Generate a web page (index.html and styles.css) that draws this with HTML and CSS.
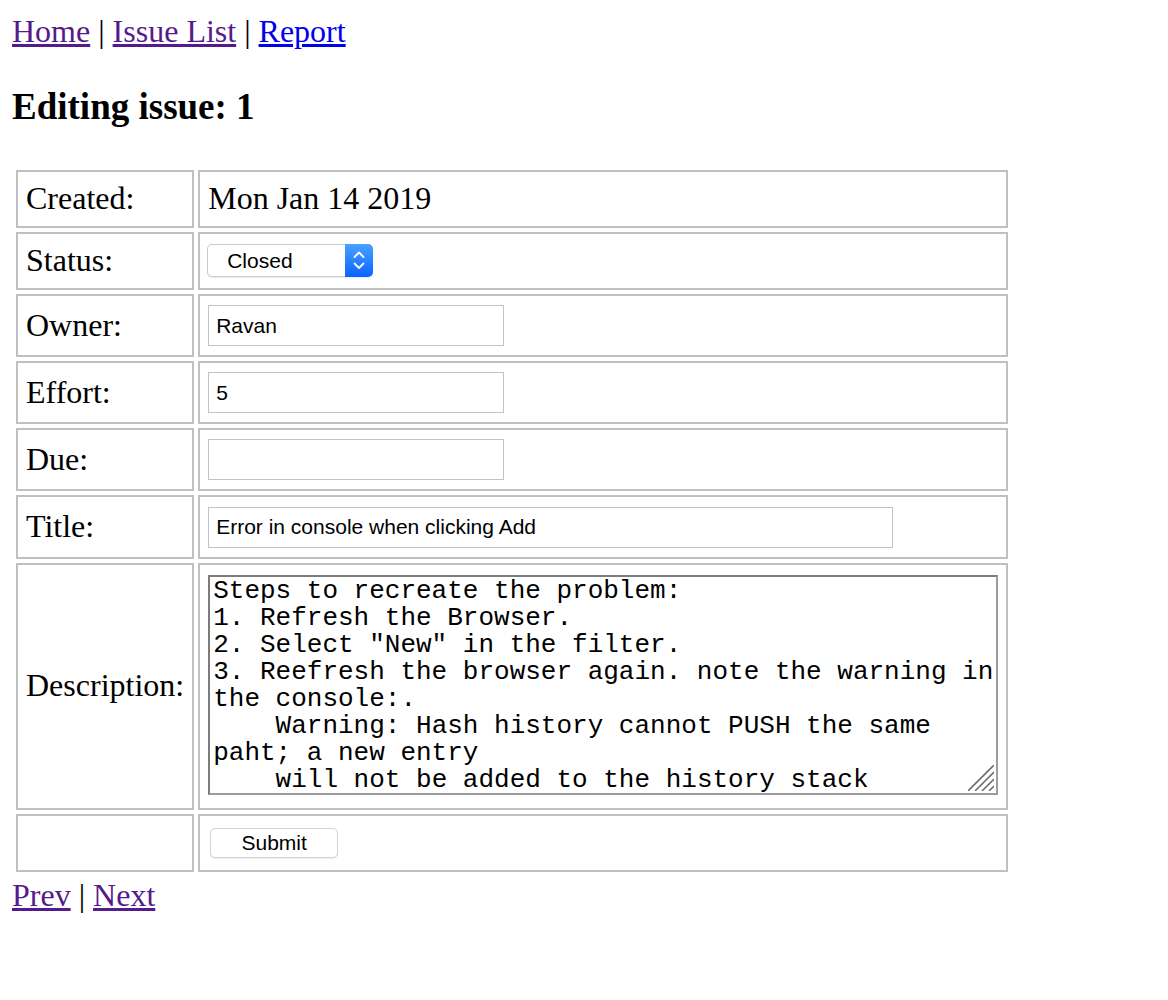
FILE: index.html
```html
<!DOCTYPE html>
<html>
<head>
<meta charset="utf-8">
<title>Editing issue</title>
<link rel="stylesheet" href="styles.css">
</head>
<body>
<div class="nav"><a class="visited" href="#">Home</a> | <a class="visited" href="#">Issue List</a> | <a class="fresh" href="#">Report</a></div>
<h3 class="title">Editing issue: 1</h3>
<form>
<table class="edit">
<tbody>
<tr><td class="label">Created:</td><td>Mon Jan 14 2019</td></tr>
<tr><td class="label">Status:</td><td><span class="select-wrap"><select class="select"><option>New</option><option>Open</option><option>Assigned</option><option>Fixed</option><option>Verified</option><option selected>Closed</option></select><span class="stepper"><svg width="28" height="33" viewBox="0 0 28 33"><polyline points="9.5,13 14,8.5 18.5,13" fill="none" stroke="#fff" stroke-width="1.8" stroke-linecap="round" stroke-linejoin="round"/><polyline points="9.5,19.5 14,24 18.5,19.5" fill="none" stroke="#fff" stroke-width="1.8" stroke-linecap="round" stroke-linejoin="round"/></svg></span></span></td></tr>
<tr><td class="label">Owner:</td><td><input class="field" type="text" value="Ravan"></td></tr>
<tr><td class="label">Effort:</td><td><input class="field" type="text" value="5"></td></tr>
<tr><td class="label">Due:</td><td><input class="field" type="text" value=""></td></tr>
<tr><td class="label">Title:</td><td><input class="field wide" type="text" value="Error in console when clicking Add"></td></tr>
<tr><td class="label">Description:</td><td><span class="area-wrap"><textarea class="area">Steps to recreate the problem:
1. Refresh the Browser.
2. Select "New" in the filter.
3. Reefresh the browser again. note the warning in the console:.
    Warning: Hash history cannot PUSH the same paht; a new entry
    will not be added to the history stack</textarea><svg class="grip" width="26" height="26" viewBox="0 0 26 26"><line x1="26" y1="0" x2="0" y2="26" stroke="#6e6e6e" stroke-width="1.6"/><line x1="26" y1="7" x2="7" y2="26" stroke="#6e6e6e" stroke-width="1.6"/><line x1="26" y1="14" x2="14" y2="26" stroke="#6e6e6e" stroke-width="1.6"/><line x1="26" y1="21" x2="21" y2="26" stroke="#6e6e6e" stroke-width="1.6"/></svg></span></td></tr>
<tr><td></td><td><button class="submit" type="button">Submit</button></td></tr>
</tbody>
</table>
</form>
<div class="pager"><a class="visited" href="#">Prev</a> | <a class="visited" href="#">Next</a></div>
</body>
</html>
```
FILE: styles.css
```css
html, body {
  background: #ffffff;
}
body {
  margin: 12px;
  font-family: "Liberation Serif", "Times New Roman", serif;
  font-size: 32px;
  line-height: 38px;
  color: #000000;
}
a.visited {
  color: #551a8b;
  text-decoration: underline;
}
a.fresh {
  color: #0000ee;
  text-decoration: underline;
}
.title {
  font-size: 37px;
  line-height: 43px;
  font-weight: bold;
  margin: 35px 0 38px 0;
}
form {
  margin: 0;
}
.edit {
  width: 1000px;
  border-collapse: separate;
  border-spacing: 4px;
}
.edit td {
  border: 2px solid #c0c0c0;
  padding: 7px 8px 9px 8px;
  vertical-align: middle;
}
.edit td.label {
  white-space: nowrap;
  width: 1px;
}
.select-wrap {
  position: relative;
  display: inline-flex;
  vertical-align: 3px;
  margin-left: -1px;
}
.select {
  -webkit-appearance: none;
  appearance: none;
  box-sizing: border-box;
  width: 166px;
  height: 33px;
  margin: 0;
  padding: 0 0 0 19px;
  border: 1px solid #cacaca;
  border-radius: 5px;
  background: #ffffff;
  box-shadow: 0 1px 1px rgba(0, 0, 0, 0.08);
  font-family: "Liberation Sans", Arial, sans-serif;
  font-size: 21px;
  color: #000000;
}
.stepper {
  position: absolute;
  right: 0;
  top: 0;
  width: 28px;
  height: 33px;
  border-radius: 0 5px 5px 0;
  background: linear-gradient(#4aa2ff, #0a63ff);
}
.stepper svg {
  display: block;
}
.field {
  box-sizing: border-box;
  width: 296px;
  height: 41px;
  margin: 0;
  padding: 0 7px;
  border: 1px solid #c2c2c2;
  border-radius: 0;
  background: #ffffff;
  font-family: "Liberation Sans", Arial, sans-serif;
  font-size: 21px;
  color: #000000;
  outline: none;
  vertical-align: middle;
}
.field.wide {
  width: 685px;
}
.area-wrap {
  position: relative;
  display: inline-block;
  margin-top: 3px;
  vertical-align: -4px;
}
.area {
  display: block;
  box-sizing: border-box;
  width: 790px;
  height: 220px;
  margin: 0;
  padding: 1px 1px 2px 3px;
  border: 2px solid;
  border-color: #7c7c7c #9c9c9c #9c9c9c #7c7c7c;
  font-family: "Liberation Mono", "Courier New", monospace;
  font-size: 26px;
  line-height: 27px;
  color: #000000;
  background: #ffffff;
  resize: none;
  overflow: hidden;
}
.grip {
  position: absolute;
  right: 4px;
  bottom: 4px;
}
.submit {
  box-sizing: border-box;
  width: 128px;
  height: 30px;
  margin: 0 2px;
  padding: 0;
  border: 1px solid #d4d4d4;
  border-radius: 5px;
  background: #ffffff;
  box-shadow: 0 1px 1px rgba(0, 0, 0, 0.08);
  font-family: "Liberation Sans", Arial, sans-serif;
  font-size: 21px;
  color: #000000;
  vertical-align: 3px;
}
.pager {
  margin: 0;
}
```
